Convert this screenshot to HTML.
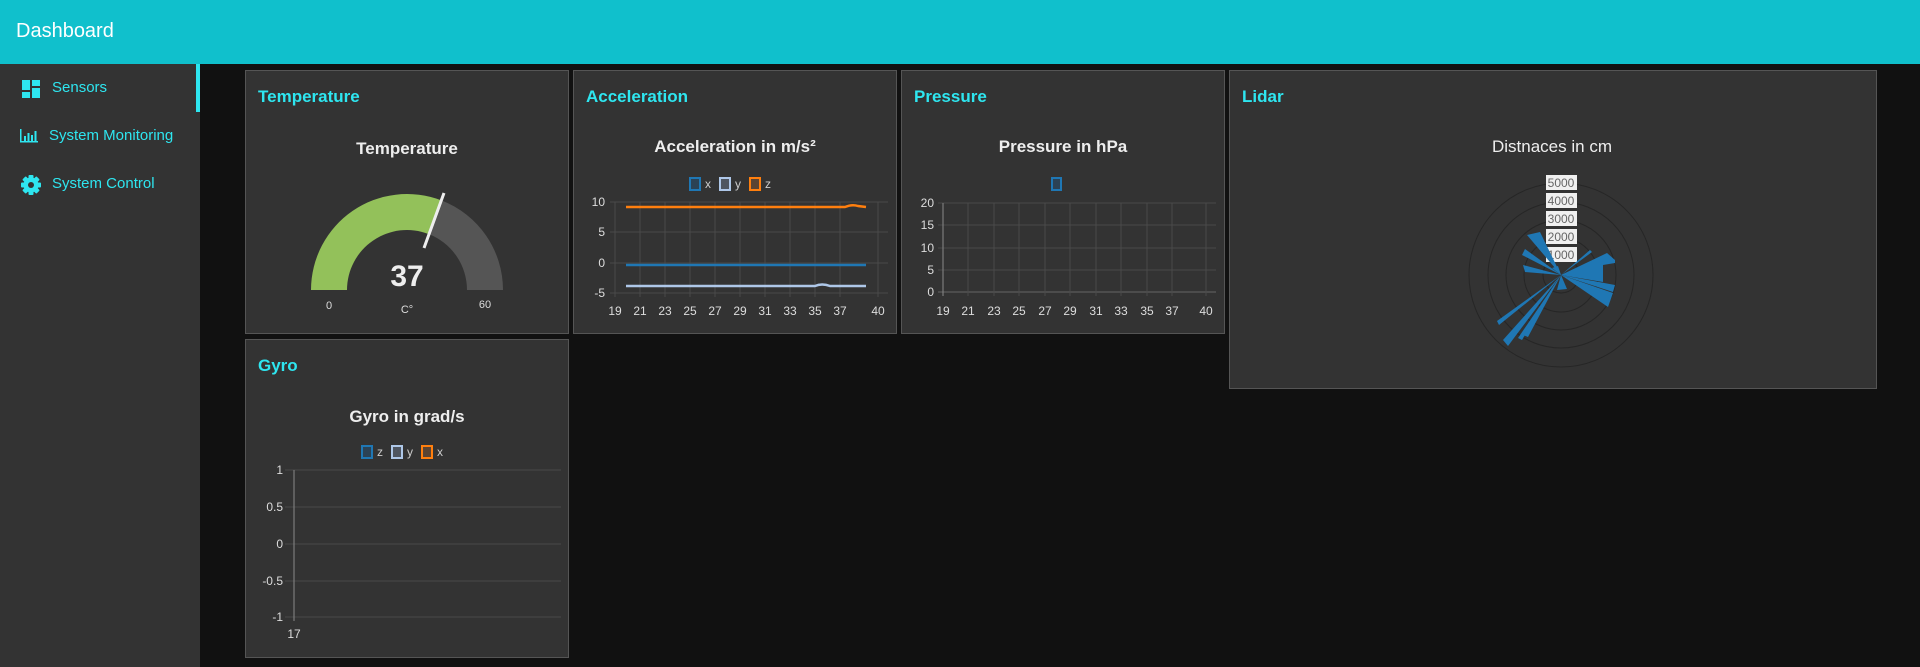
<!DOCTYPE html>
<html><head><meta charset="utf-8">
<style>
*{margin:0;padding:0;box-sizing:border-box}
body{width:1920px;height:667px;background:#111;font-family:"Liberation Sans",sans-serif;overflow:hidden;position:relative}
.hdr{position:absolute;left:0;top:0;width:1920px;height:64px;background:#10c0cc}
.hdr span{position:absolute;left:16px;top:20px;font-size:20px;color:#fff}
.side{position:absolute;left:0;top:64px;width:200px;height:603px;background:#333}
.ind{position:absolute;left:196px;top:64px;width:4px;height:48px;background:#2ee6f0}
.nav{position:absolute;color:#2ee6f0;font-size:15px}
.card{position:absolute;background:#333;border:1px solid #555}
svg.ov{position:absolute;left:0;top:0}
</style></head><body>
<div class="hdr"><span>Dashboard</span></div>
<div class="side"></div>
<div class="ind"></div>
<div class="nav" style="left:52px;top:79px">Sensors</div>
<div class="nav" style="left:49px;top:127px">System Monitoring</div>
<div class="nav" style="left:52px;top:175px">System Control</div>

<div class="card" style="left:245px;top:70px;width:324px;height:264px"></div>
<div class="card" style="left:573px;top:70px;width:324px;height:264px"></div>
<div class="card" style="left:901px;top:70px;width:324px;height:264px"></div>
<div class="card" style="left:1229px;top:70px;width:648px;height:319px"></div>
<div class="card" style="left:245px;top:339px;width:324px;height:319px"></div>

<svg class="ov" width="1920" height="667" viewBox="0 0 1920 667" font-family="Liberation Sans, sans-serif">
<!-- sidebar icons -->
<g fill="#2ee6f0">
<rect x="22" y="80" width="8" height="10"/><rect x="22" y="92" width="8" height="6"/>
<rect x="32" y="80" width="8" height="6"/><rect x="32" y="88" width="8" height="10"/>
<rect x="20" y="141" width="18" height="1.5"/><rect x="20" y="129" width="1.5" height="13"/>
<rect x="24" y="136" width="2" height="5"/><rect x="27.5" y="133" width="2" height="8"/><rect x="31" y="135" width="2" height="6"/><rect x="34.5" y="131" width="2" height="10"/>
</g>
<g transform="translate(31,185)" fill="#2ee6f0">
<circle r="7.5"/>
<g id="t"><rect x="-2.5" y="-10" width="5" height="5" rx="1"/></g>
<use href="#t" transform="rotate(45)"/><use href="#t" transform="rotate(90)"/><use href="#t" transform="rotate(135)"/>
<use href="#t" transform="rotate(180)"/><use href="#t" transform="rotate(225)"/><use href="#t" transform="rotate(270)"/><use href="#t" transform="rotate(315)"/>
<circle r="3" fill="#333"/>
</g>

<!-- card titles -->
<g fill="#2ee6f0" font-size="17" font-weight="bold">
<text x="258" y="102">Temperature</text>
<text x="586" y="102">Acceleration</text>
<text x="914" y="102">Pressure</text>
<text x="1242" y="102">Lidar</text>
<text x="258" y="371">Gyro</text>
</g>
<g fill="#eee" font-size="17" font-weight="bold" text-anchor="middle">
<text x="407" y="154">Temperature</text>
<text x="735" y="152">Acceleration in m/s²</text>
<text x="1063" y="152">Pressure in hPa</text>
<text x="1552" y="152" font-weight="normal">Distnaces in cm</text>
<text x="407" y="422">Gyro in grad/s</text>
</g>

<!-- gauge -->
<path d="M311 290 A96 96 0 0 1 441.4 200.4 L428.5 234 A60 60 0 0 0 347 290 Z" fill="#93c15a"/>
<path d="M441.4 200.4 A96 96 0 0 1 503 290 L467 290 A60 60 0 0 0 428.5 234 Z" fill="#555"/>
<line x1="444" y1="193" x2="424" y2="248" stroke="#eee" stroke-width="3"/>
<text x="407" y="286" fill="#eee" font-size="30" font-weight="bold" text-anchor="middle">37</text>
<g fill="#ddd" font-size="11" text-anchor="middle">
<text x="329" y="309">0</text><text x="485" y="308">60</text><text x="407" y="313">C°</text>
</g>

<!-- acceleration chart -->
<g stroke="#4a4a4a" stroke-width="1">
<line x1="610" y1="202" x2="888" y2="202"/><line x1="610" y1="232" x2="888" y2="232"/><line x1="610" y1="263" x2="888" y2="263"/><line x1="610" y1="293" x2="888" y2="293"/>
<line x1="615" y1="202" x2="615" y2="297"/><line x1="640" y1="202" x2="640" y2="297"/><line x1="665" y1="202" x2="665" y2="297"/><line x1="690" y1="202" x2="690" y2="297"/><line x1="715" y1="202" x2="715" y2="297"/><line x1="740" y1="202" x2="740" y2="297"/><line x1="765" y1="202" x2="765" y2="297"/><line x1="790" y1="202" x2="790" y2="297"/><line x1="815" y1="202" x2="815" y2="297"/><line x1="840" y1="202" x2="840" y2="297"/><line x1="878" y1="202" x2="878" y2="297"/>
</g>
<path d="M626 207 L845 207 Q852 204 858 206 L866 207" stroke="#ff7f0e" stroke-width="2.5" fill="none"/>
<line x1="626" y1="265" x2="866" y2="265" stroke="#1f77b4" stroke-width="2.5"/>
<path d="M626 286 L815 286 Q822 283 830 286 L866 286" stroke="#aec7e8" stroke-width="2.5" fill="none"/>
<g fill="#ddd" font-size="12" text-anchor="end">
<text x="605" y="206">10</text><text x="605" y="236">5</text><text x="605" y="267">0</text><text x="605" y="297">-5</text>
</g>
<g fill="#ddd" font-size="12" text-anchor="middle">
<text x="615" y="315">19</text><text x="640" y="315">21</text><text x="665" y="315">23</text><text x="690" y="315">25</text><text x="715" y="315">27</text><text x="740" y="315">29</text><text x="765" y="315">31</text><text x="790" y="315">33</text><text x="815" y="315">35</text><text x="840" y="315">37</text><text x="878" y="315">40</text>
</g>
<rect x="690" y="178" width="10" height="12" fill="#2b4255" stroke="#1f77b4" stroke-width="2"/>
<rect x="720" y="178" width="10" height="12" fill="#4e5560" stroke="#aec7e8" stroke-width="2"/>
<rect x="750" y="178" width="10" height="12" fill="#5a4433" stroke="#ff7f0e" stroke-width="2"/>
<g fill="#ccc" font-size="12"><text x="705" y="188">x</text><text x="735" y="188">y</text><text x="765" y="188">z</text></g>

<!-- pressure chart -->
<g stroke="#4a4a4a" stroke-width="1">
<line x1="938" y1="203" x2="1216" y2="203"/><line x1="938" y1="225" x2="1216" y2="225"/><line x1="938" y1="248" x2="1216" y2="248"/><line x1="938" y1="270" x2="1216" y2="270"/><line x1="938" y1="292" x2="1216" y2="292" stroke="#666"/>
<line x1="968" y1="203" x2="968" y2="296"/><line x1="994" y1="203" x2="994" y2="296"/><line x1="1019" y1="203" x2="1019" y2="296"/><line x1="1045" y1="203" x2="1045" y2="296"/><line x1="1070" y1="203" x2="1070" y2="296"/><line x1="1096" y1="203" x2="1096" y2="296"/><line x1="1121" y1="203" x2="1121" y2="296"/><line x1="1147" y1="203" x2="1147" y2="296"/><line x1="1172" y1="203" x2="1172" y2="296"/><line x1="1206" y1="203" x2="1206" y2="296"/>
</g>
<line x1="943" y1="203" x2="943" y2="296" stroke="#888"/>
<g fill="#ddd" font-size="12" text-anchor="end">
<text x="934" y="207">20</text><text x="934" y="229">15</text><text x="934" y="252">10</text><text x="934" y="274">5</text><text x="934" y="296">0</text>
</g>
<g fill="#ddd" font-size="12" text-anchor="middle">
<text x="943" y="315">19</text><text x="968" y="315">21</text><text x="994" y="315">23</text><text x="1019" y="315">25</text><text x="1045" y="315">27</text><text x="1070" y="315">29</text><text x="1096" y="315">31</text><text x="1121" y="315">33</text><text x="1147" y="315">35</text><text x="1172" y="315">37</text><text x="1206" y="315">40</text>
</g>
<rect x="1052" y="178" width="9" height="12" fill="#2b4255" stroke="#1f77b4" stroke-width="2"/>

<!-- lidar polar -->
<g fill="none" stroke="#262626" stroke-width="1">
<circle cx="1561" cy="275" r="18"/><circle cx="1561" cy="275" r="37"/><circle cx="1561" cy="275" r="55"/><circle cx="1561" cy="275" r="73"/><circle cx="1561" cy="275" r="92"/>
</g>
<g fill="#f0f0f0">
<rect x="1546" y="175" width="31" height="15"/><rect x="1546" y="193" width="31" height="15"/><rect x="1546" y="211" width="31" height="15"/><rect x="1546" y="229" width="31" height="15"/><rect x="1546" y="247" width="31" height="15"/>
</g>
<g fill="#666" font-size="12" text-anchor="middle">
<text x="1561" y="187">5000</text><text x="1561" y="205">4000</text><text x="1561" y="223">3000</text><text x="1561" y="241">2000</text><text x="1561" y="259">1000</text>
</g>
<g fill="#1f77b4">
<polygon points="1561,275 1527,235 1540,232"/>
<polygon points="1561,275 1522,255 1525,249"/>
<polygon points="1561,275 1523,265 1525,272"/>
<polygon points="1561,275 1590,250 1592,252"/>
<polygon points="1561,275 1607,253 1615,260 1615,263 1603,265 1603,282"/>
<polygon points="1561,275 1615,285 1613,292"/>
<polygon points="1561,275 1613,293 1608,307"/>
<polygon points="1561,275 1497,321 1499,325"/>
<polygon points="1561,275 1503,340 1508,346"/>
<polygon points="1561,275 1518,338 1522,340"/>
<polygon points="1561,275 1523,335 1528,337"/>
<polygon points="1561,275 1557,290 1567,289"/>
<polygon points="1561,275 1552,268 1558,266"/>
</g>

<!-- gyro chart -->
<g stroke="#4a4a4a" stroke-width="1">
<line x1="285" y1="470" x2="561" y2="470"/><line x1="285" y1="507" x2="561" y2="507"/><line x1="285" y1="544" x2="561" y2="544"/><line x1="285" y1="581" x2="561" y2="581"/><line x1="285" y1="617" x2="561" y2="617"/>
</g>
<line x1="294" y1="470" x2="294" y2="621" stroke="#888"/>
<g fill="#ddd" font-size="12" text-anchor="end">
<text x="283" y="474">1</text><text x="283" y="511">0.5</text><text x="283" y="548">0</text><text x="283" y="585">-0.5</text><text x="283" y="621">-1</text>
</g>
<text x="294" y="638" fill="#ddd" font-size="12" text-anchor="middle">17</text>
<rect x="362" y="446" width="10" height="12" fill="#2b4255" stroke="#1f77b4" stroke-width="2"/>
<rect x="392" y="446" width="10" height="12" fill="#4e5560" stroke="#aec7e8" stroke-width="2"/>
<rect x="422" y="446" width="10" height="12" fill="#5a4433" stroke="#ff7f0e" stroke-width="2"/>
<g fill="#ccc" font-size="12"><text x="377" y="456">z</text><text x="407" y="456">y</text><text x="437" y="456">x</text></g>
</svg>
</body></html>
